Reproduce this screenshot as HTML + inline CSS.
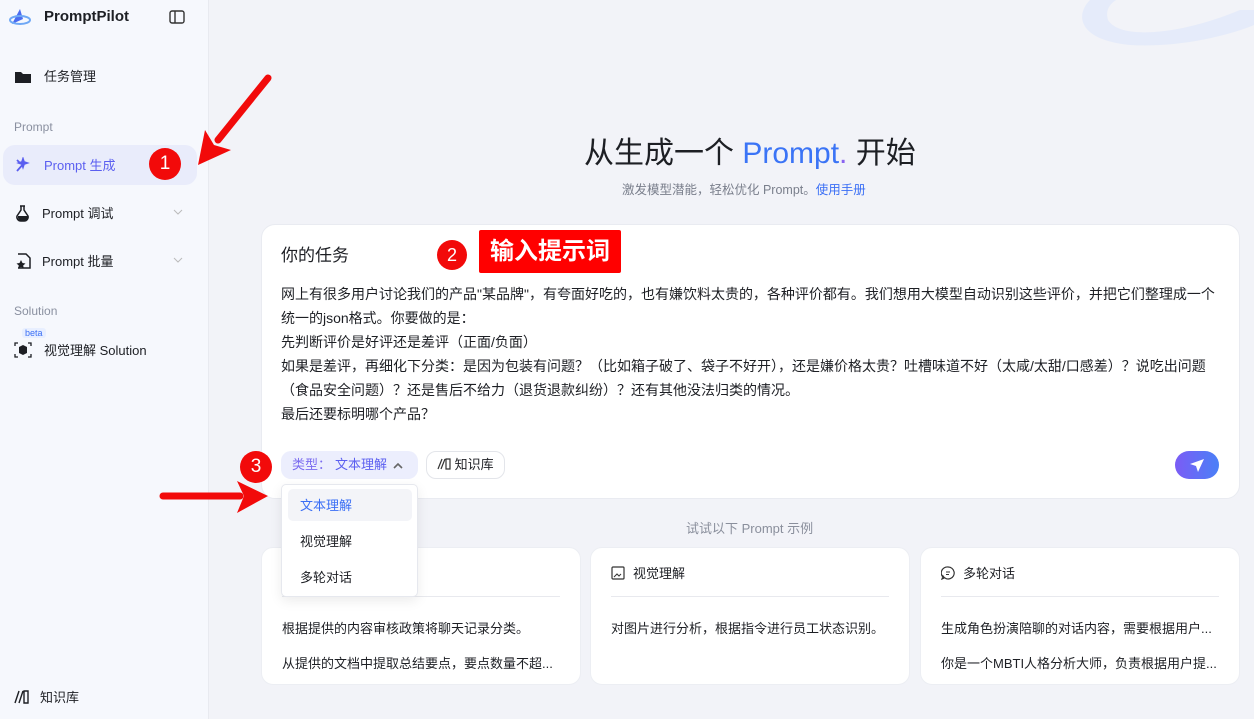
<!DOCTYPE html>
<html><head><meta charset="utf-8"><style>
*{box-sizing:border-box;margin:0;padding:0}
body{width:1254px;height:719px;overflow:hidden;background:#f2f3f8;font-family:"Liberation Sans","Noto Sans CJK SC",sans-serif;color:#1d1f24;position:relative}
.sb{position:absolute;left:0;top:0;width:209px;height:719px;background:#f6f8fd;border-right:1px solid #e8eaf0}
.abs{position:absolute}
.nav{position:absolute;left:14px;font-size:13px;color:#1d1f24;display:flex;align-items:center;gap:10px}
.sec{position:absolute;left:14px;font-size:12px;color:#8a90a0}
.card{position:absolute;background:#fff;border-radius:14px;border:1px solid #e9ebf1}
.ex{position:absolute;top:547px;width:320px;height:138px;background:#fff;border-radius:12px;border:1px solid #eceef3;font-size:13px}
.ex .h{position:absolute;left:20px;top:15px;display:flex;gap:8px;align-items:center}
.ex .ln{position:absolute;left:20px;right:20px;top:48px;border-top:1px solid #e8e9ee}
.ex .t{position:absolute;left:20px;white-space:nowrap}
</style></head><body>
<div class="sb">
  <svg class="abs" style="left:9px;top:7px" width="24" height="20" viewBox="0 0 24 20"><path d="M3 17 L11 2 L14 12 Z" fill="#4b6cf0"/><ellipse cx="11" cy="13" rx="10" ry="4" fill="none" stroke="#6fa8f5" stroke-width="2"/></svg>
  <div class="abs" style="left:44px;top:8px;font-size:15px;font-weight:bold">PromptPilot</div>
  <svg class="abs" style="left:169px;top:10px" width="16" height="14"><rect x="1" y="1" width="14" height="12" rx="2" fill="none" stroke="#333" stroke-width="1.4"/><line x1="6" y1="1" x2="6" y2="13" stroke="#333" stroke-width="1.4"/></svg>
  <div class="nav" style="top:66px"><svg width="18" height="16"><path d="M1 4h6l2 2h8v9H1z" fill="#1d1f24"/></svg><span style="margin-left:2px">任务管理</span></div>
  <div class="sec" style="top:120px">Prompt</div>
  <div class="abs" style="left:3px;top:145px;width:194px;height:40px;border-radius:12px;background:#e9ecfb"></div>
  <div class="nav" style="top:155px;color:#5b5ff0"><svg width="18" height="16"><path d="M3 14 L11 5 M9 2l1 3 3 1-3 1-1 3-1-3-3-1 3-1z M3 3l3 3" stroke="#5b5ff0" stroke-width="1.8" fill="#5b5ff0"/></svg><span style="margin-left:2px">Prompt 生成</span></div>
  <div class="nav" style="top:203px"><svg width="18" height="18"><path d="M6 2h5M7 2v4L3 12a4 4 0 0 0 4 5h3a4 4 0 0 0 4-5L10 6V2" stroke="#1d1f24" stroke-width="1.5" fill="none"/><path d="M4 12h10a4 4 0 0 1-4 5H7a4 4 0 0 1-3-5z" fill="#1d1f24"/></svg>Prompt 调试</div>
  <div class="nav" style="top:251px"><svg width="18" height="18"><path d="M4 2h8l4 4v10H4" stroke="#1d1f24" stroke-width="1.5" fill="none"/><path d="M7 8l1.5 3 3 .5-2.3 2 .6 3L7 15l-2.8 1.5.6-3-2.3-2 3-.5z" fill="#1d1f24"/></svg>Prompt 批量</div>
  <svg class="abs" style="left:173px;top:209px" width="10" height="6"><path d="M1 1l4 4 4-4" stroke="#bbb" fill="none"/></svg>
  <svg class="abs" style="left:173px;top:257px" width="10" height="6"><path d="M1 1l4 4 4-4" stroke="#bbb" fill="none"/></svg>
  <div class="sec" style="top:304px">Solution</div>
  <div class="abs" style="left:22px;top:328px;font-size:9px;color:#3b6ff5;background:#e8efff;padding:0 3px;border-radius:3px">beta</div>
  <div class="nav" style="top:340px"><svg width="18" height="16"><path d="M1 4V1h3M14 1h3v3M17 12v3h-3M4 15H1v-3" stroke="#1d1f24" fill="none" stroke-width="1.3"/><path d="M5 5l4-2 4 2v6l-4 2-4-2z" fill="#1d1f24"/></svg><span style="margin-left:2px">视觉理解 Solution</span></div>
  <div class="nav" style="top:687px"><svg width="16" height="14"><path d="M1 13L5 1M5 13L9 1M10 1h4v12h-4z" stroke="#1d1f24" fill="none" stroke-width="1.4"/></svg>知识库</div>
</div>
<svg class="abs" style="left:1080px;top:0" width="174" height="70"><path d="M160 10 C100 35 40 40 28 20 C25 10 30 4 36 0 L10 0 C-5 15 -2 40 50 45 C100 48 150 35 174 25 L174 10z" fill="#e3eafa" opacity=".9"/></svg>
<div class="abs" style="left:584px;top:128px;font-size:30px;white-space:nowrap">从生成一个 <span style="color:#3b74f6">Prompt<span style="color:#8a63f0">.</span></span> 开始</div>
<div class="abs" style="left:622px;top:179px;font-size:12.5px;color:#7a7f8c">激发模型潜能，轻松优化 Prompt。<span style="color:#3b6ff5">使用手册</span></div>
<div class="card" style="left:261px;top:224px;width:979px;height:275px"></div>
<div class="abs" style="left:281px;top:241px;font-size:17px">你的任务</div>
<div class="abs" style="left:437px;top:240px;width:30px;height:30px;border-radius:50%;background:#f20a0a;color:#fff;font-size:18px;text-align:center;line-height:30px">2</div>
<div class="abs" style="left:479px;top:230px;width:142px;height:43px;background:#ff0000;color:#fff;font-size:24px;font-weight:bold;text-align:center;line-height:43px;border-radius:2px">输入提示词</div>
<div class="abs" style="left:281px;top:282px;width:944px;font-size:14px;line-height:24px;color:#1d1f24">网上有很多用户讨论我们的产品"某品牌"，有夸面好吃的，也有嫌饮料太贵的，各种评价都有。我们想用大模型自动识别这些评价，并把它们整理成一个统一的json格式。你要做的是：<br>先判断评价是好评还是差评（正面/负面）<br>如果是差评，再细化下分类：是因为包装有问题？（比如箱子破了、袋子不好开），还是嫌价格太贵？吐槽味道不好（太咸/太甜/口感差）？说吃出问题（食品安全问题）？还是售后不给力（退货退款纠纷）？还有其他没法归类的情况。<br>最后还要标明哪个产品？</div>
<div class="abs" style="left:281px;top:451px;width:137px;height:28px;border-radius:10px;background:#eceefd;font-size:13px;line-height:28px;padding-left:11px;color:#7b6cf0">类型：<span style="color:#5b5ff0;margin-left:4px">文本理解</span><svg style="margin-left:6px" width="10" height="7"><path d="M1 6l4-4 4 4" stroke="#666" stroke-width="1.6" fill="none"/></svg></div>
<div class="abs" style="left:426px;top:451px;width:79px;height:28px;border-radius:10px;border:1px solid #e3e5ea;background:#fff;font-size:13px;line-height:26px;padding-left:10px">
<svg width="14" height="12" style="vertical-align:-1px"><path d="M1 11L5 1M4 11L8 1M9 1h4v10h-4z" stroke="#333" fill="none" stroke-width="1.2"/></svg> 知识库</div>
<div class="abs" style="left:1175px;top:451px;width:44px;height:28px;border-radius:14px;background:linear-gradient(90deg,#7b5cf5,#4a80f7)"><svg style="position:absolute;left:14px;top:7px" width="16" height="14"><path d="M15 1L1 6l6 2 2 6z" fill="#fff"/></svg></div>
<div class="abs" style="left:686px;top:518px;font-size:13px;color:#8a8f9c">试试以下 Prompt 示例</div>
<div class="ex" style="left:261px"><div class="ln"></div><div class="t" style="top:70px">根据提供的内容审核政策将聊天记录分类。</div><div class="t" style="top:105px">从提供的文档中提取总结要点，要点数量不超...</div></div>
<div class="ex" style="left:590px"><div class="h"><svg width="14" height="14"><rect x="1" y="1" width="12" height="12" rx="1" fill="none" stroke="#333" stroke-width="1.2"/><path d="M3 11l3-3 2 2 2-2" stroke="#333" fill="none"/></svg>视觉理解</div><div class="ln"></div><div class="t" style="top:70px">对图片进行分析，根据指令进行员工状态识别。</div></div>
<div class="ex" style="left:920px"><div class="h"><svg width="14" height="14"><path d="M7 1a6 6 0 1 1-5 9L1 13l2-1A6 6 0 0 1 7 1z" fill="none" stroke="#333" stroke-width="1.2"/><path d="M5 6h4M5 8.5h3" stroke="#333"/></svg>多轮对话</div><div class="ln"></div><div class="t" style="top:70px">生成角色扮演陪聊的对话内容，需要根据用户...</div><div class="t" style="top:105px">你是一个MBTI人格分析大师，负责根据用户提...</div></div>
<div class="abs" style="left:281px;top:484px;width:137px;height:113px;background:#fff;border:1px solid #e6e8ee;border-radius:5px;box-shadow:0 4px 12px rgba(0,0,0,.08);font-size:13px">
  <div style="position:absolute;left:6px;top:4px;width:124px;height:32px;border-radius:5px;background:#f3f4f8"></div>
  <div style="position:absolute;left:18px;top:10px;color:#3b6ff5">文本理解</div>
  <div style="position:absolute;left:18px;top:46px">视觉理解</div>
  <div style="position:absolute;left:18px;top:82px">多轮对话</div>
</div>
<div class="abs" style="left:149px;top:148px;width:32px;height:32px;border-radius:50%;background:#f20a0a;color:#fff;font-size:19px;text-align:center;line-height:32px">1</div>
<div class="abs" style="left:240px;top:451px;width:32px;height:32px;border-radius:50%;background:#f20a0a;color:#fff;font-size:19px;text-align:center;line-height:32px">3</div>
<svg class="abs" style="left:0;top:0" width="1254" height="719">
<path d="M268 78 L218 140" stroke="#f20a0a" stroke-width="7" stroke-linecap="round"/>
<path d="M198 165 L205 130 L214 145 L231 150 Z" fill="#f20a0a"/>
<path d="M163 496 L240 496" stroke="#f20a0a" stroke-width="7" stroke-linecap="round"/>
<path d="M268 496 L237 481 L244 496 L237 513 Z" fill="#f20a0a"/>
</svg>
</body></html>
